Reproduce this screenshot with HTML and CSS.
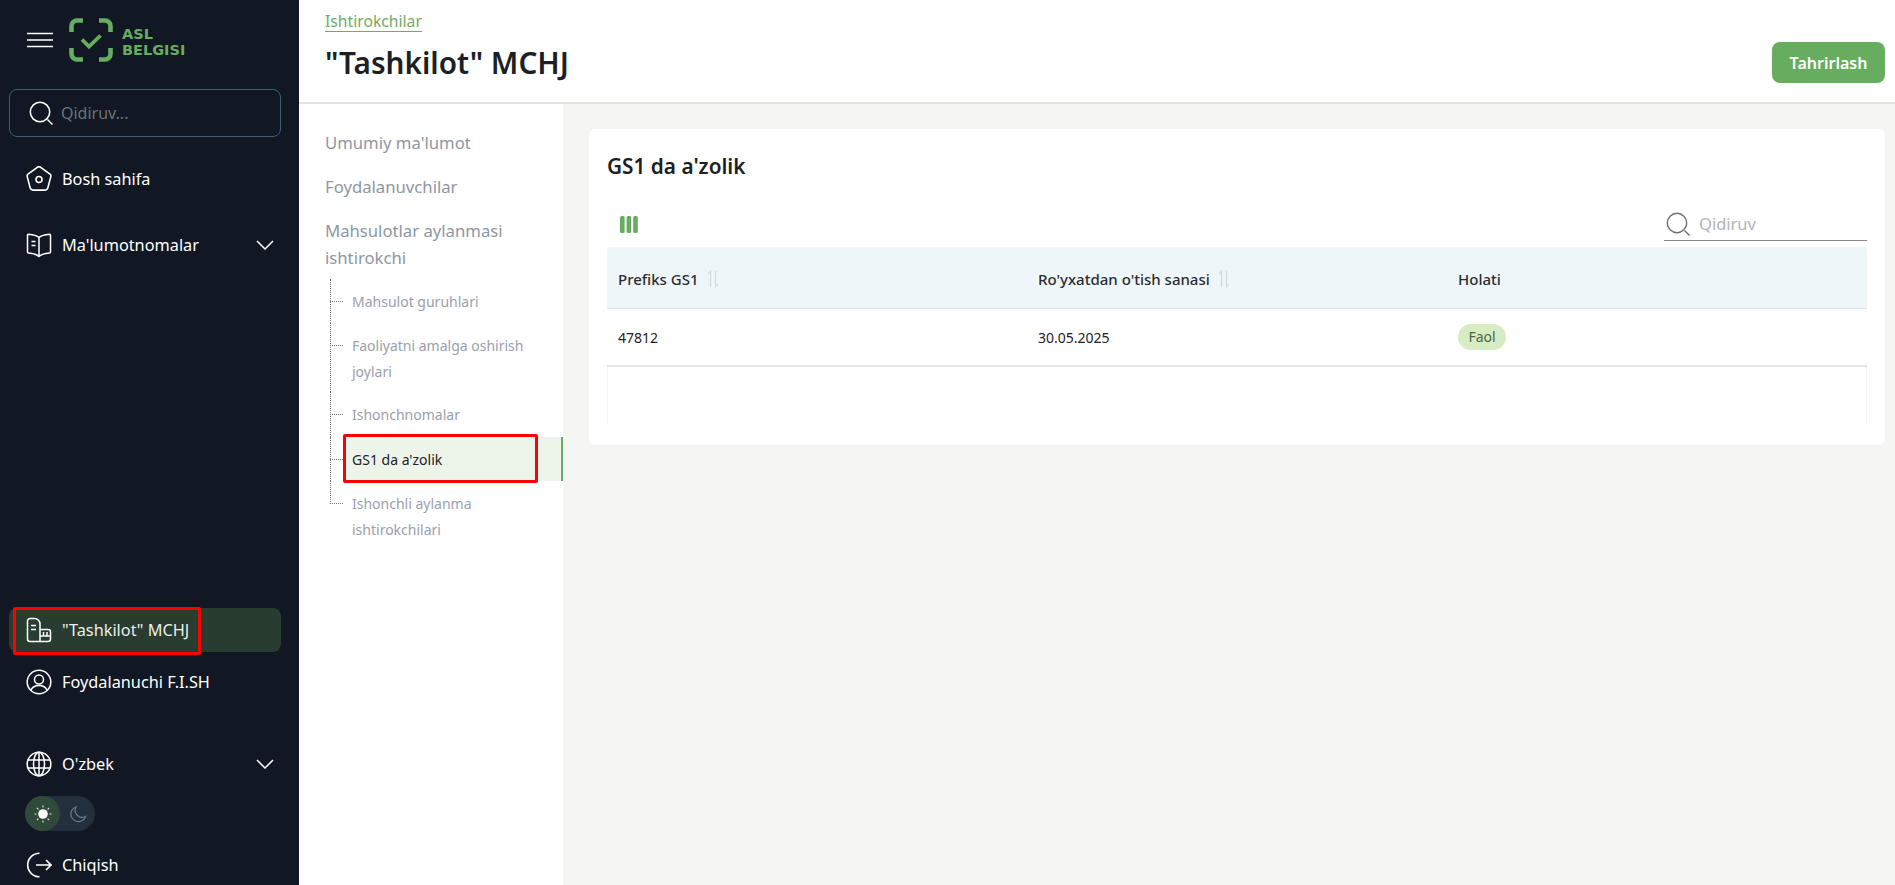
FILE: index.html
```html
<!DOCTYPE html>
<html lang="uz">
<head>
<meta charset="utf-8">
<title>Tashkilot MCHJ</title>
<link rel="stylesheet" href="styles.css">
</head>
<body>
<div class="app">
  <aside class="sidebar">
    <div class="brand">
      <svg class="burger" width="26" height="16" viewBox="0 0 26 16"><path d="M0 1.500h26M0 8h26M0 14.500h26" stroke="#fff" stroke-width="1.600" fill="none"/></svg>
      <svg class="logo-mark" width="44" height="44" viewBox="0 0 44 44" fill="none" stroke="#67ad5f" stroke-width="4.600"><path d="M14 2.500H8A5.500 5.500 0 0 0 2.500 8v6M30 2.500h6A5.500 5.500 0 0 1 41.500 8v6M2.500 30v6A5.500 5.500 0 0 0 8 41.500h6M41.500 30v6a5.500 5.500 0 0 1-5.500 5.500h-6"/><path d="M13 21.500l7 7 11.500-11" stroke-width="3.800"/></svg>
      <div class="logo-text"><span>ASL</span><span>BELGISI</span></div>
    </div>
    <div class="side-search">
      <svg class="ico24" viewBox="0 0 24 24" fill="none" stroke="#fff" stroke-width="1.500"><circle cx="11" cy="11" r="9.700"/><path d="M18.500 18.500l5 5"/></svg>
      <span>Qidiruv...</span>
    </div>
    <a class="nav-item item-home">
      <svg class="ico26" viewBox="0 0 26 26" fill="none" stroke="#fff" stroke-width="1.600"><path d="M11.300 1.300a2.800 2.800 0 0 1 3.400 0l9.300 6.900a2.200 2.200 0 0 1 .8 2.400l-3 11.400a2.800 2.800 0 0 1-2.700 2.100H6.900a2.800 2.800 0 0 1-2.700-2.100l-3-11.400a2.200 2.200 0 0 1 .8-2.400z"/><circle cx="13" cy="13.500" r="3"/></svg>
      <span>Bosh sahifa</span>
    </a>
    <a class="nav-item item-ref">
      <svg class="ico26" viewBox="0 0 26 26" fill="none" stroke="#fff" stroke-width="1.500" stroke-linejoin="round"><path d="M13 5.500C11 3.500 7 2.500 2.500 2.200a1 1 0 0 0-1 1V20a1 1 0 0 0 1 1c4.500.3 8.500 1.500 10.500 3.500 2-2 6-3.200 10.500-3.500a1 1 0 0 0 1-1V3.200a1 1 0 0 0-1-1C19 2.500 15 3.500 13 5.500zM13 5.500v19"/><path d="M5.500 9.500h4M5.500 13.500h4"/></svg>
      <span>Ma'lumotnomalar</span>
      <svg class="chev" width="18" height="10" viewBox="0 0 18 10" fill="none" stroke="#fff" stroke-width="1.500"><path d="M1 1l8 8 8-8"/></svg>
    </a>
    <div class="side-spacer"></div>
    <a class="nav-item item-active">
      <svg class="ico26" viewBox="0 0 26 26" fill="none" stroke="#fff" stroke-width="1.500" stroke-linejoin="round"><path d="M14 24.500H4A2.500 2.500 0 0 1 1.500 22V4A2.500 2.500 0 0 1 4 1.500h4.500c3 0 5.500 2.500 5.500 5.500z"/><path d="M5 8.500h5M5 12.500h5"/><path d="M14 12.500h8a2.500 2.500 0 0 1 2.500 2.500v7a2.500 2.500 0 0 1-2.500 2.500h-8"/><path d="M14 19h10.500M17.500 15v4M21 15v4"/></svg>
      <span>"Tashkilot" MCHJ</span>
      <i class="red-box red-org"></i>
    </a>
    <a class="nav-item item-user">
      <svg class="ico26" viewBox="0 0 26 26" fill="none" stroke="#fff" stroke-width="1.500"><circle cx="13" cy="13" r="11.800"/><circle cx="13" cy="10.500" r="4.500"/><path d="M4.800 21.500c1.500-3.500 4.500-5 8.200-5s6.700 1.500 8.200 5"/></svg>
      <span>Foydalanuchi F.I.SH</span>
    </a>
    <a class="nav-item item-lang">
      <svg class="ico26" viewBox="0 0 26 26" fill="none" stroke="#fff" stroke-width="1.500"><circle cx="13" cy="13" r="11.800"/><ellipse cx="13" cy="13" rx="5.500" ry="11.800"/><path d="M13 1.200v23.600M1.800 9h22.400M1.800 17h22.400"/></svg>
      <span>O'zbek</span>
      <svg class="chev" width="18" height="10" viewBox="0 0 18 10" fill="none" stroke="#fff" stroke-width="1.500"><path d="M1 1l8 8 8-8"/></svg>
    </a>
    <div class="theme">
      <span class="theme-on">
        <svg width="20" height="20" viewBox="0 0 20 20"><circle cx="10" cy="10" r="4.800" fill="#fff"/><path d="M10 1.500v2M10 16.500v2M1.500 10h2M16.500 10h2M4 4l1.400 1.400M14.600 14.600L16 16M4 16l1.400-1.400M14.600 5.400L16 4" stroke="#dfe6df" stroke-width="1.100" fill="none"/></svg>
      </span>
      <span class="theme-off">
        <svg width="18" height="18" viewBox="0 0 18 18" fill="none" stroke="#6b7683" stroke-width="1.300"><path d="M7 2a7.500 7.500 0 1 0 9.500 9.500A7 7 0 0 1 7 2z"/></svg>
      </span>
    </div>
    <a class="nav-item item-exit">
      <svg class="ico26" viewBox="0 0 26 26" fill="none" stroke="#fff" stroke-width="1.600"><path d="M13.500 1.200A11.800 11.800 0 1 0 13.500 24.800"/><path d="M10 13h15M20 8l5 5-5 5"/></svg>
      <span>Chiqish</span>
    </a>
  </aside>
  <main class="main">
    <header class="topbar">
      <div class="top-left">
        <a class="crumb">Ishtirokchilar</a>
        <h1>"Tashkilot" MCHJ</h1>
      </div>
      <button class="btn-edit">Tahrirlash</button>
    </header>
    <div class="body">
      <nav class="subnav">
        <a class="sub-top">Umumiy ma'lumot</a>
        <a class="sub-top">Foydalanuvchilar</a>
        <a class="sub-top sub-wrap">Mahsulotlar aylanmasi ishtirokchi</a>
        <ul class="tree">
          <li><a>Mahsulot guruhlari</a></li>
          <li class="two"><a>Faoliyatni amalga oshirish joylari</a></li>
          <li class="three"><a>Ishonchnomalar</a></li>
          <li class="current"><a>GS1 da a'zolik</a><i class="red-box red-sub"></i></li>
          <li class="two last"><a>Ishonchli aylanma ishtirokchilari</a></li>
        </ul>
      </nav>
      <section class="content">
        <div class="card">
          <h2>GS1 da a'zolik</h2>
          <div class="toolbar">
            <svg class="cols" width="18" height="17" viewBox="0 0 18 17" fill="#67ad5f"><rect x="0" y="0" width="4.600" height="17" rx="1.500"/><rect x="6.600" y="0" width="4.600" height="17" rx="1.500"/><rect x="13.200" y="0" width="4.600" height="17" rx="1.500"/></svg>
            <div class="tsearch">
              <svg class="ico24" viewBox="0 0 24 24" fill="none" stroke="#707070" stroke-width="1.400"><circle cx="11" cy="11" r="9.700"/><path d="M18.500 18.500l5 5"/></svg>
              <span>Qidiruv</span>
            </div>
          </div>
          <div class="table">
            <div class="row head">
              <div class="cell c1">Prefiks GS1 <svg class="sort" width="12" height="18" viewBox="0 0 12 18" fill="none" stroke="#cfdbe3" stroke-width="1.200"><path d="M3.500 17V1.500L1 4M8.500 1v15.500L11 14"/></svg></div>
              <div class="cell c2">Ro'yxatdan o'tish sanasi <svg class="sort" width="12" height="18" viewBox="0 0 12 18" fill="none" stroke="#cfdbe3" stroke-width="1.200"><path d="M3.500 17V1.500L1 4M8.500 1v15.500L11 14"/></svg></div>
              <div class="cell c3">Holati</div>
            </div>
            <div class="row data">
              <div class="cell c1">47812</div>
              <div class="cell c2">30.05.2025</div>
              <div class="cell c3"><span class="badge">Faol</span></div>
            </div>
            <div class="table-foot"></div>
          </div>
        </div>
      </section>
    </div>
  </main>
</div>
</body>
</html>
```
FILE: styles.css
```css
* { box-sizing: border-box; }
html, body { margin: 0; height: 100%; }
body { font-family: "Noto Sans", "Open Sans", sans-serif; color: #1f2124; background: #fff; overflow: hidden; }
a { text-decoration: none; display: block; }
.app { display: flex; height: 885px; }

.sidebar { width: 299px; flex: none; background: #111824; display: flex; flex-direction: column; color: #fff; padding: 0 18px 0 9px; overflow: hidden; }
.brand { display: flex; align-items: center; height: 78px; padding: 0 0 0 18px; flex: none; }
.burger { margin-top: 2px; }
.logo-mark { margin-left: 16px; margin-top: 2px; }
.logo-text { display: flex; flex-direction: column; margin-left: 9px; color: #67ad5f; font-family: "DejaVu Sans", sans-serif; font-weight: 700; font-size: 14.500px; line-height: 16px; margin-top: 5px; }
.ico24 { width: 24px; height: 24px; flex: none; }
.ico26 { width: 26px; height: 26px; flex: none; }
.side-search { height: 48px; margin-top: 11px; flex: none; border: 1px solid #3f5f73; border-radius: 8px; display: flex; align-items: center; padding: 0 0 0 19px; gap: 8px; font-size: 16px; color: #6c727b; }
.nav-item { display: flex; align-items: center; height: 44px; flex: none; padding-left: 17px; font-size: 16.300px; color: #fff; position: relative; }
.nav-item span { margin-left: 10px; }
.nav-item .chev { position: absolute; right: 7px; top: 17px; }
.item-home { margin-top: 20px; }
.item-ref { margin-top: 22px; }
.side-spacer { flex: 1; }
.item-active { background: #283c30; border-radius: 8px; color: #e9efe9; }
.item-user { margin-top: 8px; }
.item-lang { margin-top: 38px; }
.theme { margin: 10px 0 0 16px; width: 70px; height: 35px; flex: none; border-radius: 18px; background: #232f3c; display: flex; align-items: center; }
.theme-on { width: 35px; height: 35px; border-radius: 50%; background: #2f4a3a; display: flex; align-items: center; justify-content: center; }
.theme-off { width: 35px; display: flex; align-items: center; justify-content: center; }
.item-exit { margin-top: 12px; margin-bottom: -2px; }

.red-box { position: absolute; border: 3px solid #f00; border-radius: 2px; pointer-events: none; }
.red-org { left: 4px; top: -1px; width: 188px; height: 48px; }
.red-sub { left: 44px; top: -3px; width: 195px; height: 49px; }

.main { flex: 1; min-width: 0; display: flex; flex-direction: column; }
.topbar { height: 104px; flex: none; border-bottom: 2px solid #e3e3e3; display: flex; justify-content: space-between; padding: 0 10px 0 26px; background: #fff; position: relative; }
.top-left { display: flex; flex-direction: column; align-items: flex-start; padding-top: 12px; }
.crumb { display: inline-block; font-size: 15.700px; line-height: 19px; height: 20px; color: #6cae64; border-bottom: 1px solid #6cae64; }
h1 { margin: 12px 0 0; font-size: 29.700px; line-height: 38px; font-weight: 600; color: #1c1f23; }
.btn-edit { margin-top: 42px; width: 113px; height: 41px; border: 0; border-radius: 8px; background: #67ad5f; color: #fff; font-family: inherit; font-size: 16px; font-weight: 600; }

.body { flex: 1; display: flex; min-height: 0; }
.subnav { width: 264px; flex: none; background: #fff; padding-top: 25px; }
.sub-top { margin-left: 26px; margin-right: 30px; font-size: 16.700px; line-height: 27px; color: #8f96a3; margin-bottom: 17px; }
.sub-wrap { margin-bottom: 0; }
.tree { list-style: none; margin: 8px 0 0; padding: 0; position: relative; }
.tree li { position: relative; height: 44px; padding: 10px 30px 0 53px; font-size: 14px; line-height: 26px; color: #9aa0ad; }
.tree li.two { height: 69px; }
.tree li.three { height: 45px; }
.tree li::before { content: ""; position: absolute; left: 31px; top: 22px; width: 13px; border-top: 1px dotted #6e7583; }
.tree li::after { content: ""; position: absolute; left: 31px; top: 0; bottom: 0; border-left: 1px dotted #6e7583; }
.tree li.last::after { bottom: auto; height: 23px; }
.tree li.current { background: linear-gradient(#edf4ea, #edf4ea) no-repeat 44px 0 / 100% 100%; color: #1f2124; border-right: 2px solid #67ad5f; }

.content { flex: 1; background: #f5f5f3; padding: 25px 10px 0 26px; }
.card { background: #fff; border-radius: 6px; height: 316px; padding: 22px 18px 0 18px; }
h2 { margin: 0; font-size: 20.800px; line-height: 30px; font-weight: 600; color: #1c1f23; }
.toolbar { display: flex; align-items: center; justify-content: space-between; margin-top: 22px; height: 42px; }
.cols { margin-left: 13px; }
.tsearch { width: 203px; height: 34px; border-bottom: 1px solid #8a8a8a; display: flex; align-items: center; gap: 9px; padding-left: 2px; font-size: 16.500px; color: #b4b4b4; }
.table { margin-top: 2px; }
.row { display: flex; }
.row.head { height: 62px; background: #eff6f9; border-bottom: 1px solid #dfe3e6; border-radius: 4px 4px 0 0; font-size: 15px; font-weight: 500; color: #2a2d31; }
.row.head .cell { padding-top: 2px; }
.row.data { height: 58px; border-bottom: 2px solid #e5e5e5; font-size: 14px; }
.cell { display: flex; align-items: center; padding-left: 11px; }
.c1 { width: 420px; }
.c2 { width: 420px; }
.c3 { flex: 1; }
.sort { margin-left: 8px; }
.badge { display: inline-block; width: 48px; height: 26px; line-height: 26px; text-align: center; border-radius: 13px; background: #d8ecc4; color: #47683f; font-size: 14px; }
.table-foot { height: 58px; border-left: 1px solid #f3f3f3; border-right: 1px solid #f3f3f3; }
```
